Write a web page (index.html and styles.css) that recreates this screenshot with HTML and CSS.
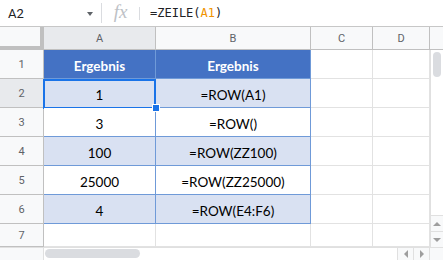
FILE: index.html
```html
<!DOCTYPE html>
<html lang="de">
<head>
  <meta charset="UTF-8">
  <title>ZEILE</title>
  <link rel="stylesheet" href="styles.css">
</head>
<body>

  <div class="formula-bar">
    <div class="name-box">
      <span class="cell-ref">A2</span>
      <span class="caret"></span>
    </div>
    <div class="fx">fx</div>
    <div class="sep"></div>
    <div class="formula">=ZEILE(<span class="ref">A1</span>)</div>
  </div>

  <div class="sheet">
    <div class="corner"></div>
    <div class="col-head selected">A</div>
    <div class="col-head">B</div>
    <div class="col-head">C</div>
    <div class="col-head">D</div>
    <div class="col-head blank"></div>

    <div class="vscroll">
      <div class="thumb"></div>
      <div class="vbtn"><span class="arrow up"></span></div>
      <div class="vbtn"><span class="arrow down"></span></div>
    </div>

    <div class="row-head">1</div>
    <div class="cell head">Ergebnis</div>
    <div class="cell head">Ergebnis</div>
    <div class="cell"></div>
    <div class="cell"></div>

    <div class="row-head selected">2</div>
    <div class="cell band active">1</div>
    <div class="cell band">=ROW(A1)</div>
    <div class="cell"></div>
    <div class="cell"></div>

    <div class="row-head">3</div>
    <div class="cell plain">3</div>
    <div class="cell plain">=ROW()</div>
    <div class="cell"></div>
    <div class="cell"></div>

    <div class="row-head">4</div>
    <div class="cell band">100</div>
    <div class="cell band">=ROW(ZZ100)</div>
    <div class="cell"></div>
    <div class="cell"></div>

    <div class="row-head">5</div>
    <div class="cell plain">25000</div>
    <div class="cell plain">=ROW(ZZ25000)</div>
    <div class="cell"></div>
    <div class="cell"></div>

    <div class="row-head">6</div>
    <div class="cell band">4</div>
    <div class="cell band">=ROW(E4:F6)</div>
    <div class="cell"></div>
    <div class="cell"></div>

    <div class="row-head">7</div>
    <div class="cell"></div>
    <div class="cell"></div>
    <div class="cell"></div>
    <div class="cell"></div>
  </div>

  <div class="hscroll">
    <div class="hscroll-left"></div>
    <div class="track"><div class="hthumb"></div></div>
    <div class="hbtn"><span class="arrow left"></span></div>
    <div class="hbtn"><span class="arrow right"></span></div>
    <div class="hcorner"></div>
  </div>

</body>
</html>
```

FILE: styles.css
```css
body {
  margin: 0;
  width: 443px;
  height: 260px;
  overflow: hidden;
  background: #fff;
  font-family: Roboto, Arial, sans-serif;
}
.formula-bar {
  display: flex;
  align-items: center;
  height: 26px;
  border-bottom: 1px solid #c7c7c7;
}
.name-box {
  width: 102px;
  height: 20px;
  box-sizing: border-box;
  display: flex;
  align-items: center;
  justify-content: space-between;
  padding: 0 8px 0 8px;
  border-right: 1px solid #dadce0;
  font-size: 13px;
  color: #202124;
}
.caret {
  width: 0;
  height: 0;
  border-left: 3.5px solid transparent;
  border-right: 3.5px solid transparent;
  border-top: 4px solid #5f6368;
  margin-top: 2px;
}
.fx {
  width: 37px;
  text-align: center;
  font-family: "Liberation Serif", serif;
  font-style: italic;
  font-size: 19px;
  color: #bdc1c6;
  margin-top: -2px;
}
.sep {
  width: 1px;
  height: 13px;
  background: #dadce0;
}
.formula {
  padding-left: 10px;
  font-family: "DejaVu Sans Mono", monospace;
  font-size: 12px;
  color: #202124;
}
.formula .ref {
  color: #f09300;
}
.sheet {
  display: grid;
  grid-template-columns: 44px 112px 155px 62px 57px 13px;
  grid-template-rows: 23px repeat(6, 29px) 23px;
}
.sheet > div {
  box-sizing: border-box;
}
.corner {
  background: #f8f9fa;
  border-right: 4px solid #c0c0c0;
  border-bottom: 4px solid #c0c0c0;
}
.col-head {
  display: flex;
  align-items: center;
  justify-content: center;
  background: #f8f9fa;
  border-right: 1px solid #c0c0c0;
  border-bottom: 1px solid #c0c0c0;
  font-size: 11px;
  color: #5f6368;
}
.col-head.blank {
  border-right: none;
}
.row-head {
  display: flex;
  align-items: center;
  justify-content: center;
  background: #f8f9fa;
  border-right: 1px solid #c0c0c0;
  border-bottom: 1px solid #c0c0c0;
  font-size: 11px;
  color: #5f6368;
}
.selected {
  background: #e8eaed;
}
.cell {
  position: relative;
  display: flex;
  align-items: flex-end;
  justify-content: center;
  padding-bottom: 4px;
  border-right: 1px solid #e2e2e2;
  border-bottom: 1px solid #e2e2e2;
  font-family: Lato, "Liberation Sans", sans-serif;
  font-size: 13.5px;
  color: #000;
}
.cell.head {
  background: #4472c4;
  border-color: #6f9ad8;
  color: #fff;
  font-weight: bold;
}
.cell.band {
  background: #d9e1f2;
  border-color: #6f9ad8;
}
.cell.plain {
  background: #fff;
  border-color: #6f9ad8;
}
.cell.active::after {
  content: "";
  position: absolute;
  top: 0;
  left: -1px;
  right: -1px;
  bottom: -2px;
  border: 2px solid #1a73e8;
}
.cell.active::before {
  content: "";
  position: absolute;
  right: -5px;
  bottom: -5px;
  width: 6px;
  height: 6px;
  background: #1a73e8;
  border: 1px solid #fff;
  z-index: 2;
}
.vscroll {
  grid-column: 6;
  grid-row: 2 / 9;
  display: flex;
  flex-direction: column;
  border-left: 1px solid #e0e0e0;
}
.thumb {
  width: 8px;
  height: 25px;
  margin: 2px 0 0 2px;
  background: #dadce0;
  border-radius: 4px;
  flex: none;
}
.vbtn {
  height: 16px;
  display: flex;
  align-items: center;
  justify-content: center;
  background: #f8f9fa;
  border-top: 1px solid #e0e0e0;
  box-sizing: border-box;
}
.vbtn:first-of-type {
  margin-top: auto;
}
.thumb + .vbtn {
  margin-top: auto;
}
.arrow {
  width: 0;
  height: 0;
}
.arrow.up {
  border-left: 4px solid transparent;
  border-right: 4px solid transparent;
  border-bottom: 4px solid #9e9e9e;
}
.arrow.down {
  border-left: 4px solid transparent;
  border-right: 4px solid transparent;
  border-top: 4px solid #9e9e9e;
}
.arrow.left {
  border-top: 4px solid transparent;
  border-bottom: 4px solid transparent;
  border-right: 4px solid #9e9e9e;
}
.arrow.right {
  border-top: 4px solid transparent;
  border-bottom: 4px solid transparent;
  border-left: 4px solid #9e9e9e;
}
.hscroll {
  display: flex;
  height: 13px;
  border-top: 1px solid #e0e0e0;
  box-sizing: border-box;
}
.hscroll-left {
  width: 44px;
  box-sizing: border-box;
  border-right: 1px solid #e0e0e0;
  background: #f8f9fa;
}
.track {
  flex: 1;
  padding: 1px 0 0 1px;
}
.hthumb {
  width: 95px;
  height: 9px;
  background: #dadce0;
  border-radius: 5px;
}
.hbtn {
  width: 16px;
  display: flex;
  align-items: center;
  justify-content: center;
  background: #f8f9fa;
  border-left: 1px solid #e0e0e0;
  box-sizing: border-box;
}
.hcorner {
  width: 13px;
  background: #f8f9fa;
  border-left: 1px solid #e0e0e0;
}
```
